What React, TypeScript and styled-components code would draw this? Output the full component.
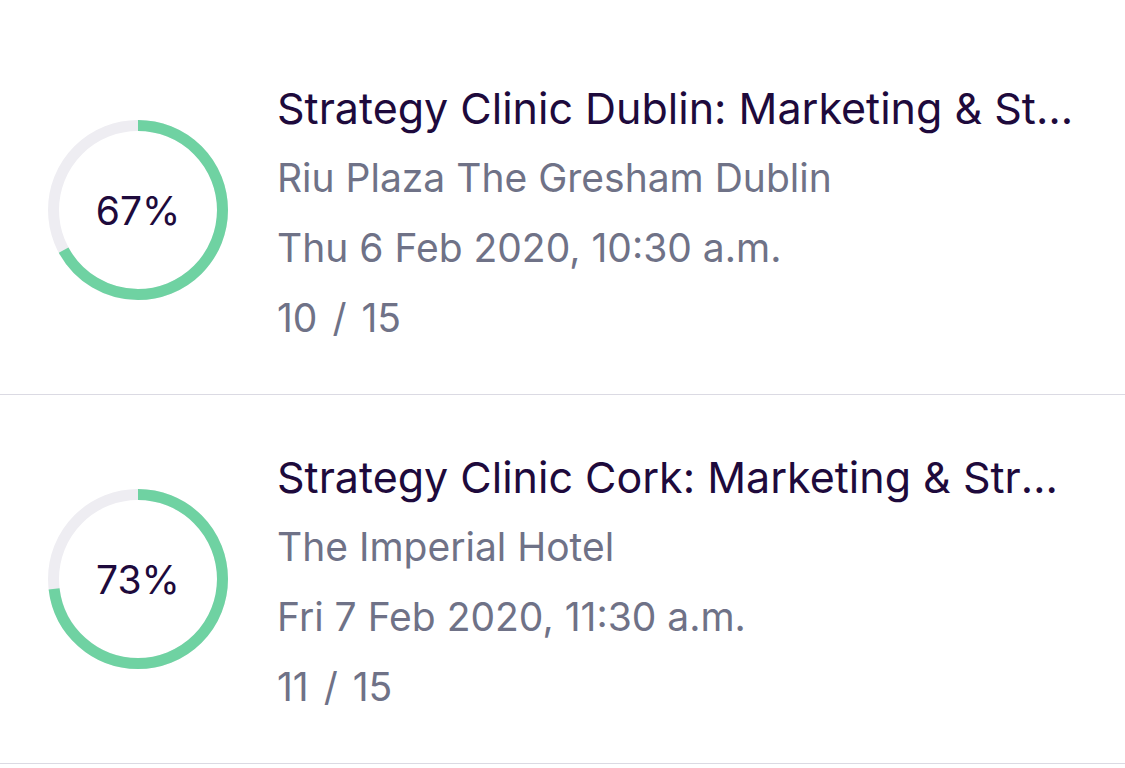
import React from 'react';
import styled, { createGlobalStyle } from 'styled-components';

const GlobalStyle = createGlobalStyle`
  html, body {
    margin: 0;
    padding: 0;
    background: #ffffff;
  }
  body {
    font-family: Inter, "Noto Sans", "Liberation Sans", sans-serif;
  }
`;

const List = styled.div`
  padding-top: 26px;
  width: 1125px;
`;

const Row = styled.div`
  display: flex;
  align-items: center;
  height: 368px;
  padding-left: 48px;
  gap: 49px;
  border-bottom: 1px solid #dbdae3;
`;

const RingWrap = styled.div`
  position: relative;
  width: 180px;
  height: 180px;
  flex-shrink: 0;
`;

const RingLabel = styled.div`
  position: absolute;
  inset: 0;
  display: flex;
  align-items: center;
  justify-content: center;
  font-size: 39px;
  color: #1e0a3c;
`;

const Info = styled.div`
  display: flex;
  flex-direction: column;
  min-width: 0;
  flex: 1;
  padding-top: 6px;
  padding-right: 45px;
`;

const Title = styled.div`
  font-size: 43px;
  line-height: 70px;
  color: #1e0a3c;
  white-space: nowrap;
  overflow: hidden;
  text-overflow: ellipsis;
`;

const Meta = styled.div<{ $wide?: boolean }>`
  font-size: 39px;
  line-height: 70px;
  color: #6f7287;
  white-space: nowrap;
  word-spacing: ${(p) => (p.$wide ? '4px' : '0')};
`;

const Ring: React.FC<{ percent: number }> = ({ percent }) => {
  const r = 84.5;
  const c = 2 * Math.PI * r;
  return (
    <RingWrap>
      <svg width="180" height="180" viewBox="0 0 180 180">
        <circle cx="90" cy="90" r={r} fill="none" stroke="#eeedf2" strokeWidth="11" />
        <circle
          cx="90"
          cy="90"
          r={r}
          fill="none"
          stroke="#6fd2a2"
          strokeWidth="11"
          strokeDasharray={`${(c * percent) / 100} ${c}`}
          transform="rotate(-90 90 90)"
        />
      </svg>
      <RingLabel>{percent}%</RingLabel>
    </RingWrap>
  );
};

const events = [
  {
    title: 'Strategy Clinic Dublin: Marketing & Strategy for Growth',
    venue: 'Riu Plaza The Gresham Dublin',
    date: 'Thu 6 Feb 2020, 10:30 a.m.',
    sold: 10,
    total: 15,
  },
  {
    title: 'Strategy Clinic Cork: Marketing & Strategy for Growth',
    venue: 'The Imperial Hotel',
    date: 'Fri 7 Feb 2020, 11:30 a.m.',
    sold: 11,
    total: 15,
  },
];

export default function App() {
  return (
    <>
      <GlobalStyle />
      <List>
        {events.map((e) => (
          <Row key={e.title}>
            <Ring percent={Math.round((e.sold / e.total) * 100)} />
            <Info>
              <Title>{e.title}</Title>
              <Meta>{e.venue}</Meta>
              <Meta>{e.date}</Meta>
              <Meta $wide>
                {e.sold} / {e.total}
              </Meta>
            </Info>
          </Row>
        ))}
      </List>
    </>
  );
}
